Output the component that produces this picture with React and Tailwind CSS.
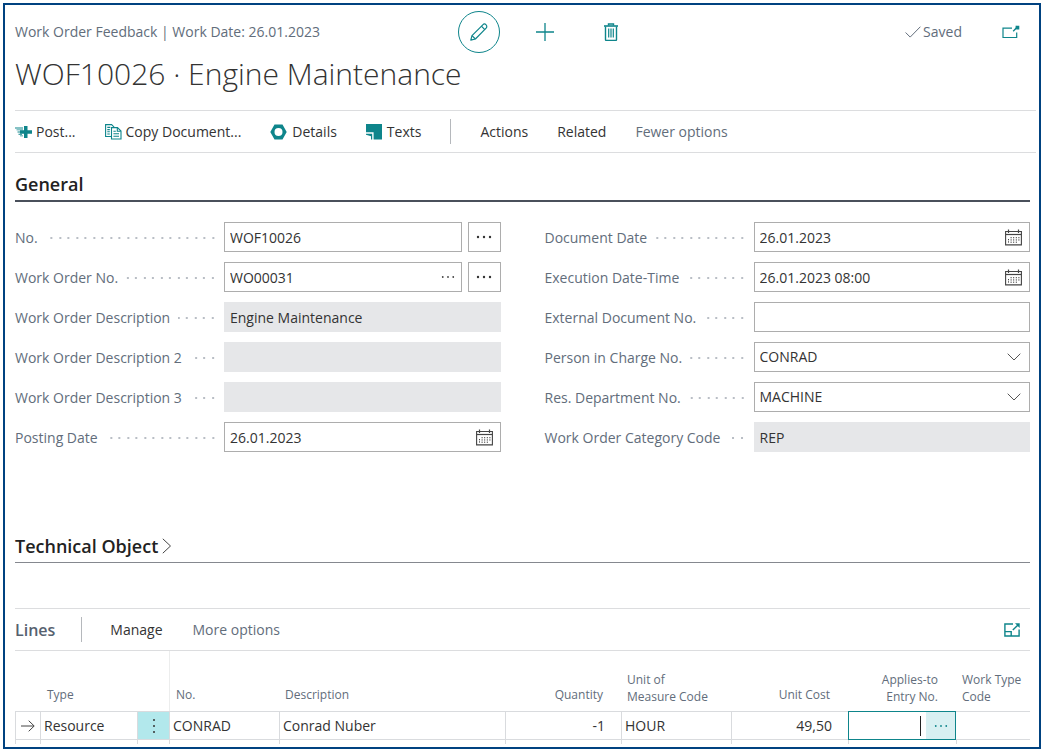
import { useState } from "react";

const leftFields = [
  { id: "no", label: "No.", value: "WOF10026", kind: "text", assist: true },
  { id: "work-order-no", label: "Work Order No.", value: "WO00031", kind: "lookup", assist: true },
  { id: "description", label: "Work Order Description", value: "Engine Maintenance", kind: "readonly" },
  { id: "description-2", label: "Work Order Description 2", value: "", kind: "readonly" },
  { id: "description-3", label: "Work Order Description 3", value: "", kind: "readonly" },
  { id: "posting-date", label: "Posting Date", value: "26.01.2023", kind: "date" },
];

const rightFields = [
  { id: "document-date", label: "Document Date", value: "26.01.2023", kind: "date" },
  { id: "execution", label: "Execution Date-Time", value: "26.01.2023 08:00", kind: "date" },
  { id: "external-no", label: "External Document No.", value: "", kind: "text" },
  { id: "person", label: "Person in Charge No.", value: "CONRAD", kind: "select" },
  { id: "department", label: "Res. Department No.", value: "MACHINE", kind: "select" },
  { id: "category", label: "Work Order Category Code", value: "REP", kind: "readonly" },
];

function PencilIcon() {
  return (
    <svg width="20" height="20" viewBox="0 0 20 20" fill="none" stroke="currentColor" strokeWidth="1.2">
      <path d="M1.8 18.2 3 13.6 13.8 2.8a2.3 2.3 0 0 1 3.3 3.3L6.4 17z" strokeLinejoin="round" />
      <path d="M3 13.6 6.4 17M12.4 4.2l3.4 3.4" />
    </svg>
  );
}

function PlusIcon() {
  return (
    <svg width="18" height="18" viewBox="0 0 18 18" stroke="currentColor" strokeWidth="1.3">
      <path d="M9 0v18M0 9h18" />
    </svg>
  );
}

function TrashIcon() {
  return (
    <svg width="16" height="18" viewBox="0 0 16 18" fill="none" stroke="currentColor">
      <path d="M1 3h14" strokeWidth="1.6" />
      <path d="M5.5 2.6V1h5v1.6" strokeWidth="1.4" />
      <path d="M2.5 3.5v13a1 1 0 0 0 1 1h9a1 1 0 0 0 1-1v-13" strokeWidth="1.4" />
      <path d="M5.7 5.5v9M8 5.5v9M10.3 5.5v9" strokeWidth="1.2" />
    </svg>
  );
}

function PopOutIcon() {
  return (
    <svg width="18" height="14" viewBox="0 0 18 14" fill="none" stroke="currentColor" strokeWidth="1.2">
      <path d="M10 3.2H1v9.3h13.7V7.5" />
      <path d="m11.2 6.2 3.6-3.6" strokeWidth="1.4" />
      <path d="M13.6.7h3.7v3.7h-3.7z" fill="currentColor" stroke="none" />
    </svg>
  );
}

function ExpandIcon() {
  return (
    <svg width="16" height="14" viewBox="0 0 16 14" fill="none" stroke="currentColor" strokeWidth="1.4">
      <path d="M9 1H.9v12h14.2V6.5" />
      <path d="M1 8.6h6.2V13" />
      <path d="m8.8 7 5.2-5" />
      <path d="M11 .3h4.7V5z" fill="currentColor" stroke="none" />
    </svg>
  );
}

function PostIcon() {
  return (
    <svg width="17" height="14" viewBox="0 0 17 14" fill="currentColor">
      <path d="M9 1h3.5v4.3H17v3.4h-4.5V13H9V8.7H5V5.3h4z" />
      <path d="M0 2.5h8v1H0zM1.5 4.5H8v.8H1.5zM2.5 6.5H5v1H2.5zM3.5 8.7H7v1H3.5zM5 10.5h3v.8H5z" />
    </svg>
  );
}

function CopyIcon() {
  return (
    <svg width="17" height="16" viewBox="0 0 17 16" fill="none" stroke="currentColor" strokeWidth="1.1">
      <path d="M6.5 12.5H.6V.6h6l2.300 2.300V4" />
      <path d="M6.5 3.6h6l3.500 3.500v7.900H6.5z" />
      <path d="M12.3 3.8v3.500h3.500M2.300 3.400h3M2.300 5.600h2.500M2.300 7.800h2.500M2.300 10h2.500M8.400 7.300h2.400M8.400 9.700h5.600M8.400 12.200h5.600" />
    </svg>
  );
}

function DetailsIcon() {
  return (
    <svg width="17" height="16" viewBox="0 0 17 16" fill="currentColor" fillRule="evenodd">
      <path d="M4.5.5h8L16.7 8l-4.200 7.500h-8L.3 8zM8.500 4a4 4 0 1 0 0 8 4 4 0 0 0 0-8z" />
    </svg>
  );
}

function TextsIcon() {
  return (
    <svg width="16" height="16" viewBox="0 0 16 16" fill="currentColor">
      <path d="M0 0h16v15.5H7.6V8.2H0z" />
      <path d="M0 9.7h6.2v5.8H5V12.2L0 10.8z" />
    </svg>
  );
}

function CalendarIcon() {
  return (
    <svg width="17" height="17" viewBox="0 0 17 17" fill="none" stroke="currentColor">
      <path d="M.6 2.5h15.8v13.4H.6z" strokeWidth="1.1" />
      <path d="M.6 5.5h15.8" strokeWidth="1.2" />
      <path d="M3.5.5V4M13.5.5V4" strokeWidth="1.2" />
      <path d="M3.5 10v4M6.1 8v6M8.7 8v6M11.3 8v6M13.9 8v4" strokeDasharray="1.3 1" />
    </svg>
  );
}

function ChevronIcon({ className }) {
  return (
    <svg className={className} width="14" height="8" viewBox="0 0 14 8" fill="none" stroke="currentColor">
      <path d="M.7.7 7 7 13.3.7" />
    </svg>
  );
}

function Dots({ size = 1 }) {
  return (
    <svg width={16 * size} height="4" viewBox={`0 0 ${16 * size} 4`} fill="currentColor">
      <circle cx={2 * size} cy="2" r={size > 0.9 ? 1.2 : 0.9} />
      <circle cx={8 * size} cy="2" r={size > 0.9 ? 1.2 : 0.9} />
      <circle cx={14 * size} cy="2" r={size > 0.9 ? 1.2 : 0.9} />
    </svg>
  );
}

function FieldControl({ field }) {
  const [value, setValue] = useState(field.value);

  if (field.kind === "readonly") {
    return (
      <input
        id={field.id}
        value={value}
        readOnly
        className="h-[30px] w-full min-w-0 bg-[#e6e7e9] pl-1.5 text-[#333] outline-none"
      />
    );
  }

  if (field.kind === "select") {
    return (
      <div className="relative h-[30px] w-full border border-[#adadad]">
        <select
          id={field.id}
          value={value}
          onChange={(e) => setValue(e.target.value)}
          className="h-full w-full appearance-none bg-transparent pl-[5px] pr-8 outline-none"
        >
          <option>{field.value}</option>
        </select>
        <ChevronIcon className="pointer-events-none absolute right-2 top-2.5 text-[#555]" />
      </div>
    );
  }

  return (
    <div className="flex h-[30px] min-w-0 flex-1 items-center border border-[#adadad]">
      <input
        id={field.id}
        value={value}
        onChange={(e) => setValue(e.target.value)}
        className="h-full min-w-0 flex-1 bg-transparent pl-[5px] outline-none"
      />
      {field.kind === "date" && (
        <button type="button" aria-label={`Choose ${field.label}`} className="pr-[7px] text-[#444]">
          <CalendarIcon />
        </button>
      )}
      {field.kind === "lookup" && (
        <button type="button" aria-label={`Look up ${field.label}`} className="pr-1.5 text-[#444]">
          <Dots size={0.875} />
        </button>
      )}
    </div>
  );
}

function Field({ field }) {
  return (
    <div className="flex items-center">
      <div className="flex w-[209px] shrink-0 items-center pr-2 pt-0.5">
        <label htmlFor={field.id} className="whitespace-nowrap text-[#626d7b]">
          {field.label}
        </label>
        <span className="ml-2 h-1 flex-1 bg-[radial-gradient(circle_at_5px_2px,#b9bec5_1px,transparent_1px),radial-gradient(circle_at_14px_2px,#b9bec5_1px,transparent_1px)] bg-[length:17px_4px] bg-right bg-repeat-x" />
      </div>
      <div className="flex min-w-0 flex-1 gap-1.5">
        <FieldControl field={field} />
        {field.assist && (
          <button
            type="button"
            aria-label={`Edit ${field.label}`}
            className="flex h-[30px] w-[33px] items-center justify-center border border-[#adadad]"
          >
            <Dots />
          </button>
        )}
      </div>
    </div>
  );
}

function Header() {
  return (
    <header className="pr-[9px]">
      <div className="grid grid-cols-[444fr_174px_398fr] items-center pt-1.5">
        <p className="text-[#626d7b]">Work Order Feedback | Work Date: 26.01.2023</p>
        <div className="flex gap-6 text-[#0e858b]">
          <button
            type="button"
            aria-label="Edit"
            className="flex size-[42px] items-center justify-center rounded-full border border-[#0e858b]"
          >
            <PencilIcon />
          </button>
          <button type="button" aria-label="New" className="flex size-[42px] items-center justify-center">
            <PlusIcon />
          </button>
          <button type="button" aria-label="Delete" className="flex size-[42px] items-center justify-center">
            <TrashIcon />
          </button>
        </div>
        <div className="flex items-center justify-end pr-2.5 text-[#626d7b]">
          <svg width="16" height="12" viewBox="0 0 16 12" fill="none" stroke="currentColor">
            <path d="m.6 6.5 4.6 4.6L15.4.7" />
          </svg>
          <span className="ml-0.5">Saved</span>
          <button type="button" aria-label="Open in new window" className="ml-10 text-[#0e858b]">
            <PopOutIcon />
          </button>
        </div>
      </div>
      <h1 className="mt-px text-[30px] font-light leading-10 text-[#333]">WOF10026 · Engine Maintenance</h1>
    </header>
  );
}

function ActionBar() {
  return (
    <nav className="mr-[3px] mt-4 flex h-[43px] items-center gap-[29px] border-y border-[#dcdddf]">
      <button type="button" className="flex items-center gap-1">
        <span className="text-[#0e858b]"><PostIcon /></span>
        Post...
      </button>
      <button type="button" className="flex items-center gap-1">
        <span className="text-[#0e858b]"><CopyIcon /></span>
        Copy Document...
      </button>
      <button type="button" className="flex items-center gap-[5px]">
        <span className="text-[#0e858b]"><DetailsIcon /></span>
        Details
      </button>
      <button type="button" className="flex items-center gap-[5px]">
        <span className="text-[#0e858b]"><TextsIcon /></span>
        Texts
      </button>
      <span className="h-[25px] w-px bg-[#b5b8bc]" />
      <button type="button">Actions</button>
      <button type="button">Related</button>
      <button type="button" className="text-[#626d7b]">Fewer options</button>
    </nav>
  );
}

function Lines() {
  const [entryNo, setEntryNo] = useState("");
  const head = "align-bottom text-xs leading-[17px] font-normal text-[#626d7b]";
  const cell = "h-[29px] border-y border-l border-[#d9dbde]";
  const stub = "h-1 border-l border-[#d9dbde]";

  return (
    <section className="mr-[9px] mt-[45px]">
      <div className="flex h-[43px] items-center border-y border-[#dcdddf]">
        <h2 className="text-base font-semibold text-[#56616f]">Lines</h2>
        <span className="ml-[26px] h-[25px] w-px bg-[#b5b8bc]" />
        <button type="button" className="ml-7">Manage</button>
        <button type="button" className="ml-[30px] text-[#626d7b]">More options</button>
        <button type="button" aria-label="Expand lines" className="ml-auto mr-2.5 text-[#0e858b]">
          <ExpandIcon />
        </button>
      </div>

      <table className="w-full table-fixed border-separate border-spacing-0">
        <colgroup>
          <col className="w-[25px]" />
          <col className="w-[97px]" />
          <col className="w-8" />
          <col className="w-[110px]" />
          <col />
          <col className="w-[116px]" />
          <col className="w-[110px]" />
          <col className="w-[117px]" />
          <col className="w-[108px]" />
          <col className="w-[74px]" />
        </colgroup>
        <thead>
          <tr className="h-[60px] text-left">
            <th className={head} />
            <th className={`${head} pb-2 pl-[7px]`}>Type</th>
            <th className={head} />
            <th className={`${head} border-l border-[#eceded] pb-2 pl-1.5`}>No.</th>
            <th className={`${head} pb-2 pl-1.5`}>Description</th>
            <th className={`${head} pb-2 pr-[18px] text-right`}>Quantity</th>
            <th className={`${head} pb-1.5 pl-1.5`}>Unit of<br />Measure Code</th>
            <th className={`${head} pb-2 pr-[18px] text-right`}>Unit Cost</th>
            <th className={`${head} pb-1.5 pr-[18px] text-right`}>Applies-to<br />Entry No.</th>
            <th className={`${head} whitespace-nowrap pb-1.5 pl-1.5`}>Work Type<br />Code</th>
          </tr>
        </thead>
        <tbody>
          <tr>
            <td className={cell}>
              <svg className="mx-auto" width="14" height="12" viewBox="0 0 14 12" fill="none" stroke="#444">
                <path d="M0 6h13M7.7.7 13.2 6l-5.5 5.3" />
              </svg>
            </td>
            <td className={`${cell} pl-[3px]`}>Resource</td>
            <td className={`${cell} bg-[#b2e8ec]`}>
              <button type="button" aria-label="Row options" className="flex w-full justify-center">
                <svg width="4" height="16" viewBox="0 0 4 16" fill="#333">
                  <circle cx="2" cy="2" r="1" />
                  <circle cx="2" cy="8" r="1" />
                  <circle cx="2" cy="14" r="1" />
                </svg>
              </button>
            </td>
            <td className={`${cell} pl-[3px]`}>CONRAD</td>
            <td className={`${cell} pl-[3px]`}>Conrad Nuber</td>
            <td className={`${cell} pr-4 text-right`}>-1</td>
            <td className={`${cell} pl-[3px]`}>HOUR</td>
            <td className={`${cell} pr-4 text-right`}>49,50</td>
            <td className="h-[29px] border border-[#0e858b] p-0">
              <div className="flex h-[27px] items-center">
                <input
                  aria-label="Applies-to Entry No."
                  value={entryNo}
                  onChange={(e) => setEntryNo(e.target.value)}
                  className="h-full min-w-0 flex-1 text-right outline-none"
                />
                <span className="mr-[5px] h-5 w-px bg-[#222]" />
                <button
                  type="button"
                  aria-label="Look up entry"
                  className="flex h-full w-[29px] items-center justify-center bg-[#d8f0f2] text-[#0e858b]"
                >
                  <Dots size={0.875} />
                </button>
              </div>
            </td>
            <td className="h-[29px] border-y border-[#d9dbde]" />
          </tr>
          <tr>
            <td className={stub} />
            <td className={stub} />
            <td className={stub} />
            <td className={stub} />
            <td className={stub} />
            <td className={stub} />
            <td className={stub} />
            <td className={stub} />
            <td className={stub} />
            <td className={stub} />
          </tr>
        </tbody>
      </table>
    </section>
  );
}

export default function App() {
  return (
    <div className="bg-white p-[3px] pr-1 font-['Open_Sans','Noto_Sans',sans-serif] text-sm text-[#333]">
      <main className="border-2 border-[#004280] pb-[3px] pl-2.5">
        <Header />
        <ActionBar />

        <section className="mr-[9px] mt-[17px]">
          <h2 className="border-b-2 border-[#4a505b] pb-0.5 text-lg font-semibold leading-7 text-[#222]">
            General
          </h2>
          <div className="mt-5 grid grid-cols-2 gap-x-11">
            <div className="flex flex-col gap-2.5">
              {leftFields.map((field) => (
                <Field key={field.id} field={field} />
              ))}
            </div>
            <div className="flex flex-col gap-2.5">
              {rightFields.map((field) => (
                <Field key={field.id} field={field} />
              ))}
            </div>
          </div>
        </section>

        <section className="mr-[9px] mt-20">
          <h2 className="border-b border-[#85888f] pb-0.5 text-lg font-semibold leading-7 text-[#222]">
            <button type="button" className="flex items-center gap-1">
              Technical Object
              <svg width="10" height="16" viewBox="0 0 10 16" fill="none" stroke="#444">
                <path d="M.8.8 8.5 8 .8 15.2" />
              </svg>
            </button>
          </h2>
        </section>

        <Lines />
      </main>
    </div>
  );
}
